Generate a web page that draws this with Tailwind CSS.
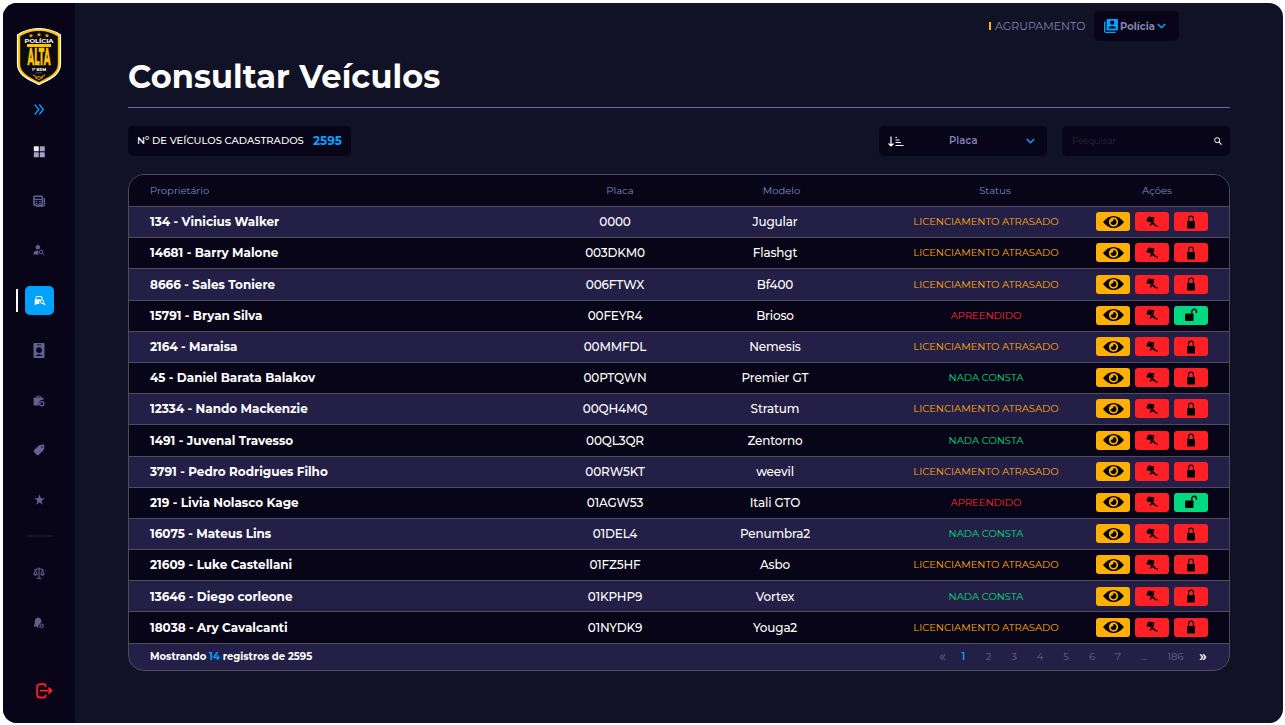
<!DOCTYPE html>
<html lang="pt-BR">
<head>
<meta charset="utf-8">
<title>Consultar Veículos</title>
<script src="https://cdn.jsdelivr.net/npm/@tailwindcss/browser@4"></script>
</head>
<body class="h-[725px] w-[1285px] overflow-hidden bg-white pt-[3px] pl-[3px] font-['Montserrat','Inter',sans-serif]">
<svg class="hidden">
  <symbol id="eye" viewBox="0 0 21 12"><path d="M0 6Q4.800 0 10.500 0T21 6Q16.200 12 10.500 12T0 6Z"/><circle cx="10.500" cy="6" r="4.700" fill="#ffb000"/><path d="M10.500 3.100A2.900 2.900 0 1 1 7.600 6 2.700 2.700 0 0 0 10.500 3.100Z"/></symbol>
  <symbol id="cuffs" viewBox="0 0 12 12"><circle cx="3.800" cy="3" r="2.500"/><path d="M.4 4.200 2 2.600 5 1 7 1.300 8.300 1 8 3.400 8.300 4.600 7 5.600 7.800 6.800 9 7.500 9.600 9 12 9.600V10.600L9.200 10.200 6.800 8.200 4.800 9.600H3.200L5 7.600 4.200 6.400 5 5.200 3.600 5.800.8 5.400Z"/><path d="M5.300 5.600l1.300 1.200M6.200 3.200l.8.800" stroke="#ff2025" stroke-width=".6"/></symbol>
  <symbol id="lock" viewBox="0 0 10 14"><path d="M2.600 6V3.600a2.400 2.400 0 0 1 4.800 0V6" fill="none" stroke="currentColor" stroke-width="1.200"/><rect x="1" y="6" width="8" height="7.600" rx=".8"/></symbol>
  <symbol id="unlock" viewBox="0 0 14 14"><path d="M7.800 6V3.500a2.300 2.300 0 0 1 4.600 0V5" fill="none" stroke="currentColor" stroke-width="1.400"/><rect x="1" y="5.500" width="8.500" height="7.500" rx=".8"/></symbol>
</svg>
<div class="flex h-[720px] w-[1280px] overflow-hidden rounded-[14px] bg-[#111226]">
  <aside class="flex w-[72px] shrink-0 flex-col items-center bg-[#070517] text-[#656092]">
    <svg class="mt-[24px] h-[59px] w-[46px] overflow-visible" viewBox="0 0 46 59">
      <path d="M23 1.500C30 1.500 39 4 44.500 8V37C44.500 48 34 52 23 57.500 12 52 1.500 48 1.500 37V8C7 4 16 1.500 23 1.500Z" fill="#ffc400" stroke="#fff" stroke-width="1.200"/>
      <path d="M23 4C30 4 37 6 41.800 9.500V37C41.800 46 33 50 23 55 13 50 4.200 46 4.200 37V9.500C9 6 16 4 23 4Z" fill="#0b0a12"/>
      <path d="M15 6.400l.7 1.300 1.500.2-1.100 1 .3 1.500-1.400-.7-1.400.7.300-1.500-1.100-1 1.500-.2ZM23 5.400l.7 1.300 1.500.2-1.100 1 .3 1.500-1.400-.7-1.400.7.300-1.500-1.100-1 1.500-.2ZM31 6.400l.7 1.300 1.500.2-1.100 1 .3 1.500-1.400-.7-1.400.7.300-1.500-1.100-1 1.500-.2Z" fill="#e69a12"/>
      <text x="23" y="15.500" text-anchor="middle" font-size="6" font-weight="700" fill="#fff" textLength="29" lengthAdjust="spacingAndGlyphs">POLÍCIA</text>
      <rect x="11" y="17" width="24" height="3" fill="#ffc400"/>
      <text x="23" y="38" text-anchor="middle" font-size="24" font-weight="800" fill="#ffc400" stroke="#ffc400" stroke-width=".4" textLength="23" lengthAdjust="spacingAndGlyphs">ALTA</text>
      <text x="23" y="43.500" text-anchor="middle" font-size="3.800" font-weight="800" fill="#fff" textLength="14">1º BPM</text>
      <path d="M20 45.800h6" stroke="#56525d" stroke-width="1"/>
      <path d="M17 47.500l4 3 2-1 2 1 4-3M19 50.500l4 2 4-2" fill="none" stroke="#b77b14" stroke-width="1.200"/>
    </svg>
    <svg class="mt-[18px] h-[11px] w-[10px] text-[#00a2ff]" viewBox="0 0 10 11" fill="none" stroke="currentColor" stroke-width="1.300"><path d="M.8.5 4.800 5.500 .8 10.500M5.300.5 9.300 5.500 5.300 10.500"/></svg>
    <svg class="mt-[31px] h-[12px] w-[12px]" viewBox="0 0 12 12" fill="#a79fc0"><rect x=".8" y=".3" width="5" height="5" rx=".6" fill="#eeeaf7"/><rect x="6.800" y=".3" width="5" height="5" rx=".6"/><rect x=".8" y="6.300" width="5" height="5" rx=".6"/><rect x="6.800" y="6.300" width="5" height="5" rx=".6"/></svg>
    <svg class="mt-[37px] h-[12px] w-[12px]" viewBox="0 0 12 12" fill="none" stroke="currentColor"><rect x="1" y="1.200" width="8.400" height="9" rx=".8" stroke-width="1.600"/><path d="M11.400 3v7q0 1.200-1.200 1.200H3M1 4.300h8M2.500 6.500h2M2.500 8.500h2M6 6.500h2M6 8.500h2" stroke-width="1.200"/></svg>
    <svg class="mt-[37px] h-[12px] w-[12px]" viewBox="0 0 12 12" fill="currentColor"><circle cx="4.800" cy="3.200" r="2.200"/><path d="M.5 10.500V8.800Q1 7 5 6.600 4.800 8.800 6 10.500Z"/><circle cx="8" cy="8" r="1.800" fill="none" stroke="currentColor"/><path d="M9.300 9.300l2 2" stroke="currentColor"/></svg>
    <div class="mt-[30px] flex w-full items-center gap-[7px] pl-[13px]">
      <div class="h-[23px] w-[2px] bg-white"></div>
      <div class="flex h-[29px] w-[29px] items-center justify-center rounded-[5px] bg-[#00a2ff] text-white">
        <svg class="h-[11px] w-[12px]" viewBox="0 0 12 11" fill="currentColor"><path fill-rule="evenodd" d="M2 1.500Q2.300 1 3 1H7Q7.700 1 8 1.500L9 4Q6 4 5.300 6.500 5 8 5.500 9H2.200V10H.7V5ZM2.700 2 2 4.200H7.800L7.200 2Z"/><circle cx="8" cy="6.700" r="1.700" fill="none" stroke="currentColor"/><path d="M9.200 8l2 2" stroke="currentColor" stroke-width="1.200"/></svg>
      </div>
    </div>
    <svg class="mt-[28px] h-[15px] w-[12px]" viewBox="0 0 12 15" fill="currentColor"><path fill-rule="evenodd" d="M1.200 0H10.800Q11.500 0 11.500.7V14.300Q11.500 15 10.800 15H1.200Q.5 15 .5 14.300V.7Q.5 0 1.200 0ZM4 1.500v.8h4V1.500ZM6 4.200A2.900 2.900 0 1 0 6 10 2.900 2.900 0 1 0 6 4.200ZM2.200 13H9.800Q8 11.200 6 11.200T2.200 13Z"/></svg>
    <svg class="mt-[37px] h-[12px] w-[12px]" viewBox="0 0 12 12" fill="currentColor"><path d="M4 2.500V1.200h3.500V2.500" fill="none" stroke="currentColor"/><path d="M1.500 2.500H9.800Q10.500 2.500 10.500 3.200V4.700Q6 4.500 5.700 8.500 5.700 9.700 6.100 10.500H.6V3.200Q.8 2.500 1.500 2.500Z"/><circle cx="8.800" cy="8.700" r="2.100" fill="none" stroke="currentColor" stroke-width="1.300"/></svg>
    <svg class="mt-[37px] h-[12px] w-[12px]" viewBox="0 0 12 12"><path fill="currentColor" fill-rule="evenodd" d="M6 1.300 10 .6Q11.500.5 11.400 2L10.800 6 5.600 11.100Q4.800 11.700 4 11L.9 7.900Q.2 7.100.9 6.300ZM9 2.200a.8.800 0 1 0 0 1.600.8.800 0 0 0 0-1.600Z"/></svg>
    <svg class="mt-[38px] h-[11px] w-[11px]" viewBox="0 0 24 24" fill="currentColor"><path d="M12 17.800 5 23.200 7.700 14.500.8 9.300H9.300L12 .8l2.700 8.500h8.500l-6.900 5.200L19 23.200Z"/></svg>
    <div class="mt-[30px] h-[2px] w-[25px] bg-[#141527]"></div>
    <svg class="mt-[30px] h-[12px] w-[12px]" viewBox="0 0 12 12" fill="none" stroke="currentColor"><path d="M6 .5V11M3.500 11.200h5M1.500 2.500 6 1.800l4.500.7" stroke-width="1.100"/><path d="M2.500 3 .8 7.200H4.200ZM9.500 3 7.800 7.200h3.400ZM.8 7.600q1.700 1.500 3.400 0M7.800 7.600q1.700 1.500 3.400 0" stroke-width="1"/></svg>
    <svg class="mt-[38px] h-[12px] w-[12px]" viewBox="0 0 12 12" fill="currentColor"><path d="M5 .5q3.200.6 3.400 3.800L8 6Q5.500 6.500 5.300 9.300V10.500L4 10.800V9.500H.6Q1.800 8.200 1.800 4.600 2 1.300 5 .5Z"/><circle cx="8.600" cy="8.900" r="1.500" fill="none" stroke="currentColor"/><path d="M8.600 6.300v1M8.600 10.500v1M6.300 7.600l.9.500M10 9.700l.9.500M6.300 10.200l.9-.5M10 8.100l.9-.5" stroke="currentColor" stroke-width=".9"/></svg>
    <svg class="mt-[54px] ml-[11px] h-[16px] w-[17px] text-[#ff2025]" viewBox="0 0 17 16" fill="none" stroke="currentColor" stroke-width="1.800"><path d="M9.500 4V2.600Q9.500 1.200 8 1.200H4Q1.200 1.200 1.200 4v7.500q0 3 2.800 3H8q1.500 0 1.500-1.500V11.500M4 7.700H15.500M12.500 4.700l3 3-3 3"/></svg>
  </aside>

  <main class="flex min-w-0 flex-1 flex-col pr-[53px] pl-[53px]">
    <div class="mt-[8px] mr-[51px] flex h-[30px] items-center justify-end">
      <div class="mr-[4px] h-[8px] w-[2px] bg-[#ffb800]"></div>
      <span class="mr-[8px] w-[91px] text-[11px] whitespace-nowrap text-[#8380b0]">AGRUPAMENTO</span>
      <div class="flex h-[30px] w-[85px] items-center rounded-[5px] bg-[#070517] pl-[10px]">
        <svg class="h-[14px] w-[14px] text-[#00a2ff]" viewBox="0 0 14 14" fill="currentColor"><path fill-rule="evenodd" d="M3.500 0H13q1 0 1 1v9.500q0 1-1 1H3.500q-1 0-1-1V1q0-1 1-1ZM8.200 1.600a2.100 2.100 0 1 0 0 4.200 2.100 2.100 0 0 0 0-4.200ZM4.500 9.500H12V8.800Q11 7 8.200 7T4.500 8.800Z"/><path d="M.6 2.500V12q0 1.300 1.300 1.300H11.500" fill="none" stroke="currentColor" stroke-width="1.300"/></svg>
        <span class="ml-[2px] w-[35px] pt-px text-[10px] font-bold text-[#8581b0]">Polícia</span>
        <svg class="ml-[2px] h-[6px] w-[9px] text-[#00a2ff]" viewBox="0 0 9 6" fill="none" stroke="currentColor" stroke-width="1.600"><path d="M.8 1 4.500 4.700 8.200 1"/></svg>
      </div>
    </div>
    <h1 class="mt-[13px] h-[45px] text-[32px] leading-[45px] font-bold tracking-[0.003em] whitespace-nowrap text-white">Consultar Veículos</h1>
    <div class="mt-[8px] h-px shrink-0 bg-[#6e69a2]"></div>

    <div class="mt-[18px] flex h-[30px] shrink-0 items-center">
      <div class="flex h-[30px] w-[223px] items-center rounded-[5px] bg-[#070517] pl-[9px] whitespace-nowrap text-white">
        <span class="w-[176px] pb-px text-[10px] font-medium">Nº DE VEÍCULOS CADASTRADOS</span>
        <span class="text-[12px] font-bold text-[#00a2ff]">2595</span>
      </div>
      <div class="ml-auto flex h-[30px] w-[168px] items-center rounded-[5px] bg-[#070517] pl-[9px]">
        <svg class="h-[11px] w-[16px] text-white" viewBox="0 0 16 11" fill="none" stroke="currentColor"><path d="M3 .5V10M.5 7.500 3 10l2.500-2.500M7.500 1.500H9M7.500 4h4M7.500 6.500H13M7.500 9.500h8" stroke-width="1.200"/></svg>
        <span class="ml-[45px] w-[77px] pb-px text-[10px] font-semibold tracking-[0.01em] text-[#8581b0]">Placa</span>
        <svg class="h-[6px] w-[9px] text-[#00a2ff]" viewBox="0 0 9 6" fill="none" stroke="currentColor" stroke-width="1.600"><path d="M.8 1 4.500 4.700 8.200 1"/></svg>
      </div>
      <div class="ml-[15px] flex h-[30px] w-[168px] items-center justify-between rounded-[5px] bg-[#070517] pr-[8px] pl-[10px]">
        <span class="text-[9px] text-[#28264a]">Pesquisar</span>
        <svg class="h-[8px] w-[8px] text-white" viewBox="0 0 8 8" fill="none" stroke="currentColor"><circle cx="3.200" cy="3.200" r="2.500"/><path d="M5.100 5.100 7.600 7.600" stroke-width="1.200"/></svg>
      </div>
    </div>

    <section class="mt-[18px] flex h-[497px] shrink-0 flex-col overflow-hidden rounded-[16px] border border-[#4d4c58] bg-[#241f46]">
      <div class="flex h-[31px] shrink-0 items-center bg-[#070517] pl-[21px] text-[10px] text-[#7c8abf]">
        <span class="w-[390px]">Proprietário</span>
        <span class="w-[160px] text-center">Placa</span>
        <span class="w-[163px] text-center">Modelo</span>
        <span class="w-[264px] text-center">Status</span>
        <span class="w-[60px] text-center">Ações</span>
      </div>
      <div id="rows" class="flex shrink-0 flex-col"></div>
      <div class="flex flex-1 items-center border-t border-[#4d4c58] pl-[21px]">
        <span class="text-[10px] font-bold whitespace-nowrap text-white">Mostrando <span class="text-[#00a2ff]">14</span> registros de 2595</span>
        <div class="mr-[16px] ml-auto flex items-center text-center text-[10px] text-[#69648f]">
          <span class="w-[17px] text-[14px] leading-[15px]">«</span><span class="w-[25px] font-semibold text-[#00a2ff]">1</span><span class="w-[25px]">2</span><span class="w-[26px]">3</span><span class="w-[26px]">4</span><span class="w-[26px]">5</span><span class="w-[26px]">6</span><span class="w-[26px]">7</span><span class="w-[27px]">...</span><span class="w-[35px]">186</span><span class="w-[20px] text-[14px] leading-[15px] font-semibold text-white">»</span>
        </div>
      </div>
    </section>
  </main>
</div>
<script>
const L = ['LICENCIAMENTO ATRASADO', 'text-[#ffa90c]'];
const A = ['APREENDIDO', 'text-[#ff2830]'];
const N = ['NADA CONSTA', 'text-[#08dc7a]'];
const data = [
  ['134 - Vinicius Walker', '0000', 'Jugular', L],
  ['14681 - Barry Malone', '003DKM0', 'Flashgt', L],
  ['8666 - Sales Toniere', '006FTWX', 'Bf400', L],
  ['15791 - Bryan Silva', '00FEYR4', 'Brioso', A],
  ['2164 - Maraisa', '00MMFDL', 'Nemesis', L],
  ['45 - Daniel Barata Balakov', '00PTQWN', 'Premier GT', N],
  ['12334 - Nando Mackenzie', '00QH4MQ', 'Stratum', L],
  ['1491 - Juvenal Travesso', '00QL3QR', 'Zentorno', N],
  ['3791 - Pedro Rodrigues Filho', '00RW5KT', 'weevil', L],
  ['219 - Livia Nolasco Kage', '01AGW53', 'Itali GTO', A],
  ['16075 - Mateus Lins', '01DEL4', 'Penumbra2', N],
  ['21609 - Luke Castellani', '01FZ5HF', 'Asbo', L],
  ['13646 - Diego corleone', '01KPHP9', 'Vortex', N],
  ['18038 - Ary Cavalcanti', '01NYDK9', 'Youga2', L],
];
document.getElementById('rows').innerHTML = data.map(([owner, plate, model, st], i) => `
  <div class="flex h-[31.2px] items-center border-t border-[#4d4c58] pt-[0.4px] pl-[21px] whitespace-nowrap text-white ${i % 2 ? 'bg-[#070517]' : 'bg-[#241f46]'}">
    <span class="w-[385px] text-[12px] font-bold">${owner}</span>
    <span class="w-[160px] text-center text-[12px] font-medium tracking-[-0.012em]">${plate}</span>
    <span class="w-[160px] text-center text-[12px] font-medium tracking-[-0.012em]">${model}</span>
    <span class="w-[262px] pb-[1px] text-center text-[10px]/[15px] tracking-[-0.003em] ${st[1]}">${st[0]}</span>
    <div class="-ml-[21px] mb-[1px] flex gap-[5px] text-[#070517]">
      <div class="flex h-[19px] w-[34px] items-center justify-center rounded-[3px] bg-[#ffb000]"><svg class="h-[12px] w-[21px]"><use href="#eye"/></svg></div>
      <div class="flex h-[19px] w-[34px] items-center justify-center rounded-[3px] bg-[#ff2025]"><svg class="h-[12px] w-[12px]"><use href="#cuffs"/></svg></div>
      ${st === A
        ? '<div class="flex h-[19px] w-[34px] items-center justify-center rounded-[3px] bg-[#00d97e]"><svg class="h-[14px] w-[14px]"><use href="#unlock"/></svg></div>'
        : '<div class="flex h-[19px] w-[34px] items-center justify-center rounded-[3px] bg-[#ff2025]"><svg class="h-[14px] w-[10px]"><use href="#lock"/></svg></div>'}
    </div>
  </div>`).join('');
</script>
</body>
</html>
